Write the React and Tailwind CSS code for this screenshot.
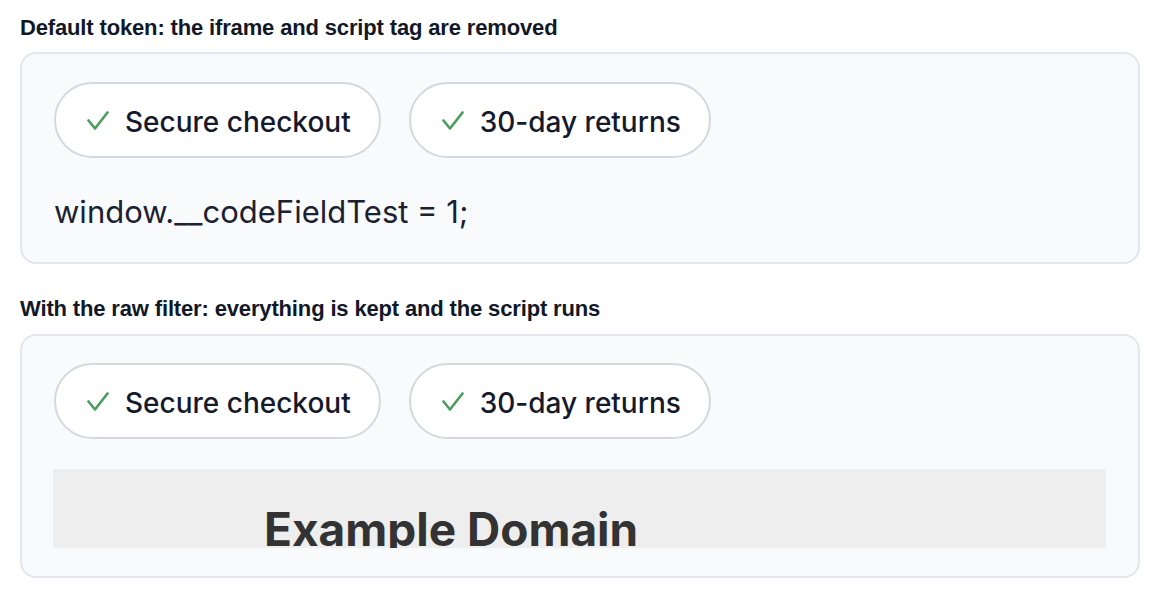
import React from 'react';

const Check = () => (
  <svg width="22" height="21" viewBox="0 0 22 21" fill="none" className="shrink-0">
    <path d="M1.5 10.5 L8 18.5 L20.5 2.5" stroke="#4a9e5c" strokeWidth="2.6" strokeLinecap="round" strokeLinejoin="round" />
  </svg>
);

const Pill = ({ label }) => (
  <div className="flex items-center gap-[16px] h-[76px] pl-[31px] pr-[28px] rounded-full border-2 border-[#d5d8de] bg-white">
    <Check />
    <span className="text-[28px] leading-[34px] pt-[3px] font-medium text-[#141a2b]">{label}</span>
  </div>
);

const Badges = () => (
  <div className="flex gap-[28px]">
    <Pill label="Secure checkout" />
    <Pill label="30-day returns" />
  </div>
);

export default function App() {
  return (
    <div className="min-h-screen bg-white px-[20px] pt-[16px]" style={{ fontFamily: 'Inter, "Noto Sans", sans-serif' }}>
      <h2 className="text-[22px] leading-[24px] font-bold text-[#111827] tracking-[-0.15px]" style={{ fontFamily: '"Liberation Sans", Arial, sans-serif' }}>
        Default token: the iframe and script tag are removed
      </h2>
      <div className="mt-[12px] rounded-2xl border-2 border-[#e3e6ec] bg-[#f8fafc] pt-[28px] px-[32px] pb-[30px]">
        <Badges />
        <p className="mt-[34px] text-[31px] leading-[40px] text-[#1b2131]">window.__codeFieldTest = 1;</p>
      </div>

      <h2 className="mt-[33px] text-[22px] leading-[24px] font-bold text-[#111827] tracking-[-0.15px]" style={{ fontFamily: '"Liberation Sans", Arial, sans-serif' }}>
        With the raw filter: everything is kept and the script runs
      </h2>
      <div className="mt-[13px] rounded-2xl border-2 border-[#e3e6ec] bg-[#f8fafc] pt-[27px] px-[32px] pb-[28px]">
        <Badges />
        <div className="mt-[30px] -ml-px h-[79px] overflow-hidden bg-[#eeeeee]">
          <div className="pl-[211px] pt-[31px] text-[46px] leading-[58px] font-bold text-[#333333] whitespace-nowrap">
            Example Domain
          </div>
        </div>
      </div>
    </div>
  );
}
